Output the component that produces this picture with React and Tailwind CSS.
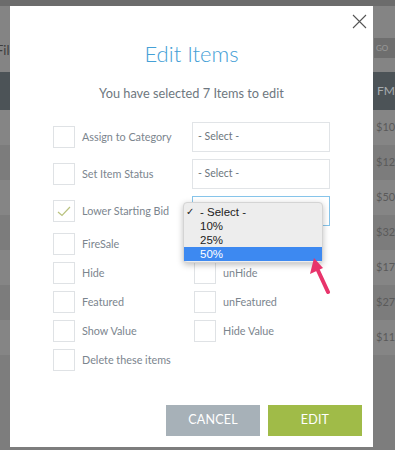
import React from "react";

const lato = { fontFamily: "Lato, 'Open Sans', sans-serif" };

function Box({ checked }) {
  return (
    <div className="w-[22px] h-[22px] border border-[#dfe2e5] bg-white flex items-center justify-center shrink-0">
      {checked && (
        <svg width="14" height="11" viewBox="0 0 14 11" fill="none">
          <path d="M1 6 L5 9.5 L13 1" stroke="#b9c27e" strokeWidth="1.2" />
        </svg>
      )}
    </div>
  );
}

function Check({ label, checked }) {
  return (
    <div className="flex items-center gap-[7px]">
      <Box checked={checked} />
      <span className="text-[10.8px] text-[#7b858e] whitespace-nowrap">{label}</span>
    </div>
  );
}

function Select({ focused }) {
  return (
    <div
      className={
        "w-[138px] h-[30px] bg-white flex items-center pl-[5px] text-[10.5px] text-[#6d767d] " +
        (focused ? "border-[1.5px] border-[#86c4ea]" : "border border-[#e1e4e7]")
      }
    >
      {focused ? "" : "- Select -"}
    </div>
  );
}

export default function App() {
  const rows = ["$10", "$12", "$50", "$32", "$17", "$27", "$11"];
  return (
    <div className="relative w-[395px] h-[450px] overflow-hidden bg-[#7d7d7d]" style={lato}>
      {/* background page */}
      <div className="flex flex-col">
        <div className="h-[6px] bg-[#6c6c6c]" />
        <div className="h-[66px] bg-[#848484] flex items-start justify-between">
          <span className="text-[13px] leading-[16px] text-[#3e3e3e] -ml-[4px] mt-[36px]">File</span>
          <div className="w-[21px] h-[20px] bg-[#6e6e6e] mt-[32px] text-[8px] text-[#9b9b9b] flex items-center pl-[2px]">GO</div>
        </div>
        <div className="h-[38px] bg-[#4c5357] flex items-center justify-end">
          <span className="w-[21px] text-[12px] text-[#a6abae] pl-[3px] overflow-hidden whitespace-nowrap">FMV</span>
        </div>
        {rows.map((r, i) => (
          <div
            key={r}
            className={"h-[35px] flex items-center justify-end " + (i % 2 === 0 ? "bg-[#858585]" : "bg-[#7c7c7c]")}
          >
            <span className="w-[21px] text-[11px] text-[#5a5a5a] pl-[2px] overflow-hidden whitespace-nowrap">{r}0</span>
          </div>
        ))}
      </div>

      {/* modal */}
      <div className="absolute left-[10px] top-[6px] w-[363px] h-[441px] bg-white flex flex-col">
        <svg className="absolute left-[342px] top-[8px]" width="15" height="15" viewBox="0 0 15 15">
          <path d="M1 1 L14 14 M14 1 L1 14" stroke="#555" strokeWidth="1.1" />
        </svg>
        <div className="mt-[34px] text-center text-[22px] leading-[28px] font-light text-[#45a0d6]">Edit Items</div>
        <div className="mt-[16px] text-center text-[12.75px] leading-[18px] text-[#6e7780]">
          You have selected 7 Items to edit
        </div>
        <div className="mt-[20px] ml-[43px] flex flex-col gap-[7px]">
          <div className="flex items-center">
            <div className="w-[139px]"><Check label="Assign to Category" /></div>
            <Select />
          </div>
          <div className="flex items-center">
            <div className="w-[139px]"><Check label="Set Item Status" /></div>
            <Select />
          </div>
          <div className="flex items-center">
            <div className="w-[139px]"><Check label="Lower Starting Bid" checked /></div>
            <Select focused />
          </div>
          <div className="flex items-center">
            <div className="w-[141px]"><Check label="FireSale" /></div>
          </div>
          <div className="flex items-center">
            <div className="w-[141px]"><Check label="Hide" /></div>
            <Check label="unHide" />
          </div>
          <div className="flex items-center">
            <div className="w-[141px]"><Check label="Featured" /></div>
            <Check label="unFeatured" />
          </div>
          <div className="flex items-center">
            <div className="w-[141px]"><Check label="Show Value" /></div>
            <Check label="Hide Value" />
          </div>
          <div className="flex items-center">
            <Check label="Delete these items" />
          </div>
        </div>
        <div className="flex-1" />
        <div className="flex justify-end gap-[8px] mr-[11px] mb-[11px]">
          <button className="w-[94px] h-[31px] bg-[#a7b1b8] text-white text-[12.5px] tracking-[0.2px]">CANCEL</button>
          <button className="w-[94px] h-[31px] bg-[#a0bb48] text-white text-[12.5px] tracking-[0.2px]">EDIT</button>
        </div>

        {/* native dropdown menu */}
        <div
          className="absolute left-[173px] top-[196px] w-[140px] h-[61px] bg-[#ededed] rounded-[4px] border border-[#d4d4d4] shadow-[0_2px_6px_rgba(0,0,0,0.25)] pt-[2px] text-[11.5px] leading-[14px] text-[#222]"
          style={{ fontFamily: "'Liberation Sans', Arial, sans-serif" }}
        >
          <div className="flex h-[14px]">
            <span className="w-[16px] pl-[2px] text-[10px]">✓</span>
            <span>- Select -</span>
          </div>
          <div className="h-[14px] pl-[16px]">10%</div>
          <div className="h-[14px] pl-[16px]">25%</div>
          <div className="h-[14px] pl-[16px] bg-[#3d89f1] text-white">50%</div>
        </div>

        {/* pink arrow */}
        <svg className="absolute left-[296px] top-[246px]" width="30" height="42" viewBox="0 0 30 42">
          <path d="M9 12 L22 40" stroke="#e8346b" strokeWidth="4" strokeLinecap="round" />
          <path d="M8 6 L4 22 L17 16 Z" fill="#e8346b" />
        </svg>
      </div>
    </div>
  );
}
